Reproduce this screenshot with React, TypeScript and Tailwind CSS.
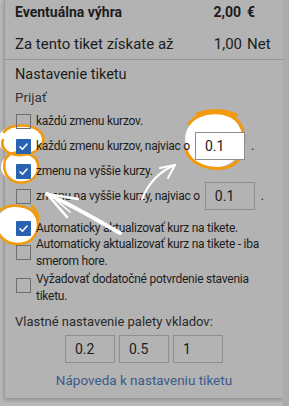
import React from "react";

const ORANGE = "#f29a0e";

function Box({ checked = false }: { checked?: boolean }) {
  if (checked) {
    return (
      <span className="flex size-[15px] shrink-0 items-center justify-center rounded-[1px] bg-[#2a62b2]">
        <svg viewBox="0 0 12 12" className="size-[11px]" fill="none" stroke="#fff" strokeWidth="1.6" strokeLinecap="round" strokeLinejoin="round">
          <path d="M2.2 6.4 4.8 8.9 9.9 3.2" />
        </svg>
      </span>
    );
  }
  return <span className="size-[15px] shrink-0 border border-[#6e6e6e]" />;
}

function Field({ value, className = "" }: { value: string; className?: string }) {
  return (
    <span className={"flex h-[28px] w-[50px] shrink-0 items-center border border-[#8e8e8e] pl-[9px] text-[14px] tracking-normal text-[#1c1c1c] " + className}>
      {value}
    </span>
  );
}

/** kruhové zvýraznenie — biela plocha pod obsahom */
function Highlights() {
  return (
    <svg className="pointer-events-none absolute inset-0 z-[1]" width="289" height="406" viewBox="0 0 289 406">
      <g fill="#fff">
        <ellipse cx="20" cy="140" rx="22" ry="15" />
        <ellipse cx="20" cy="167" rx="19" ry="15" />
        <ellipse cx="17" cy="225" rx="21" ry="19" />
        <ellipse cx="214" cy="140" rx="29" ry="28" />
      </g>
      <g fill="none" stroke={ORANGE} strokeWidth="2.6" strokeLinecap="round">
        <path d="M4 132 C12 122 36 124 42 134 C47 143 38 154 22 155 C8 156 0 148 3 140" />
        <path d="M10 154 C1 160 2 178 16 182 C30 185 40 176 38 164 C36 154 22 150 10 154 L6 158" />
        <path d="M-2 212 C8 202 32 204 37 218 C41 232 32 244 18 244 C4 244 -4 234 -3 224" />
        <path d="M32 206 C36 210 38 214 38 218" />
        <path d="M189 124 C198 110 230 108 240 124 C248 138 244 162 228 167 C210 172 190 164 186 150" strokeWidth="3.2" />
        <path d="M198 114 C210 110 224 110 236 115" strokeWidth="4" />
      </g>
    </svg>
  );
}

/** biele ručne kreslené šípky nad obsahom */
function Arrows() {
  return (
    <svg className="pointer-events-none absolute inset-0 z-[3]" width="289" height="406" viewBox="0 0 289 406">
      <g fill="none" stroke="#fff" strokeLinecap="round" strokeLinejoin="round">
        <path d="M142 199 C148 184 158 172 175 165" strokeWidth="2.2" />
        <path d="M175 165 L160 168 M175 165 L168 178" strokeWidth="2" />
        <path d="M120 233 C100 222 78 208 47 194" strokeWidth="4" />
        <path d="M47 194 L78 199 M47 194 L67 217" strokeWidth="2.6" />
        <path d="M56 200 L70 212" strokeWidth="1.6" />
      </g>
    </svg>
  );
}

export default function App() {
  return (
    <div className="relative flex h-[406px] w-[289px] overflow-hidden bg-[#b9b9b9] font-['Roboto',sans-serif] text-[#1c1c1c]">
      <Highlights />
      <div className="ml-[4px] h-[398px] w-[279px] border-l border-[#9a9a9a] bg-[#b3b3b3] shadow-[0_2px_4px_rgba(0,0,0,0.25)]">
        <div className="relative z-[2] flex flex-col">
          <div className="flex h-[24px] items-center pl-[10px] pr-[10px] text-[14px] font-bold">
            <span className="flex-1">Eventuálna výhra</span>
            <span>2,00</span>
            <span className="ml-[6px] w-[26px]">€</span>
          </div>
          <div className="mt-[8px] flex h-[24px] items-center pl-[10px] pr-[10px] text-[15px]">
            <span className="flex-1">Za tento tiket získate až</span>
            <span>1,00</span>
            <span className="ml-[5px] w-[26px]">Net</span>
          </div>
          <div className="mt-[3px] border-t border-[#999]" />
          <div className="px-[10px]">
            <div className="mt-[5px] text-[14.5px] leading-[20px]">Nastavenie tiketu</div>
            <div className="mt-[3px] text-[13.5px] leading-[18px] text-[#333]">Prijať</div>

            <div className="mt-[4px] flex flex-col text-[12px] tracking-[-0.25px]">
              <div className="flex h-[22px] items-center gap-[5px] pl-px">
                <Box />
                <span>každú zmenu kurzov.</span>
              </div>
              <div className="flex h-[28px] items-center gap-[5px] pl-px">
                <Box checked />
                <span className="whitespace-nowrap">každú zmenu kurzov, najviac o</span>
                <Field value="0.1" className="bg-white" />
                <span className="ml-[1px]">.</span>
              </div>
              <div className="flex h-[22px] items-center gap-[5px] pl-px">
                <Box checked />
                <span>zmenu na vyššie kurzy.</span>
              </div>
              <div className="flex h-[28px] items-center gap-[5px] pl-px">
                <Box />
                <span className="whitespace-nowrap">zmenu na vyššie kurzy, najviac o</span>
                <Field value="0.1" />
                <span className="ml-[1px]">.</span>
              </div>
              <div className="mt-[7px] flex h-[22px] items-center gap-[5px] pl-px">
                <Box checked />
                <span>Automaticky aktualizovať kurz na tikete.</span>
              </div>
              <div className="mt-[-3px] flex items-start gap-[5px] pl-px leading-[17px]">
                <span className="mt-[9px] flex shrink-0"><Box /></span>
                <span className="pr-[6px]">Automaticky aktualizovať kurz na tikete - iba smerom hore.</span>
              </div>
              <div className="mt-[1px] flex items-start gap-[5px] pl-px leading-[17px]">
                <span className="mt-[7px] flex shrink-0"><Box /></span>
                <span className="pr-[6px]">Vyžadovať dodatočné potvrdenie stavenia tiketu.</span>
              </div>
            </div>

            <div className="mt-[8px] text-[13px] leading-[18px] text-[#2a2a2a]">Vlastné nastavenie palety vkladov:</div>
            <div className="mt-[4px] flex justify-center gap-[4px]">
              <Field value="0.2" />
              <Field value="0.5" />
              <Field value="1" />
            </div>
            <div className="mt-[7px] text-center text-[13.5px] text-[#3c5a88]">Nápoveda k nastaveniu tiketu</div>
          </div>
        </div>
      </div>
      <div className="h-full flex-1 bg-[#ababab]" />
      <Arrows />
    </div>
  );
}
